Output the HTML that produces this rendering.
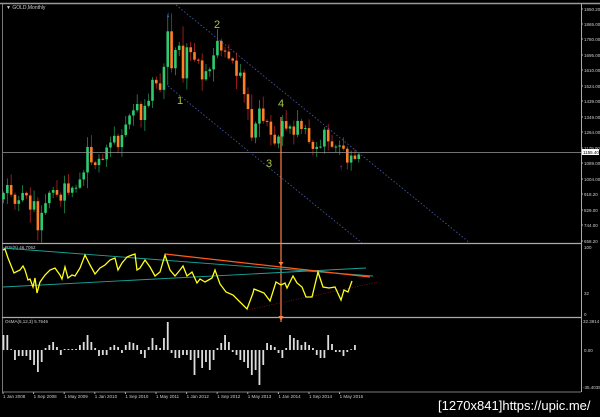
<!DOCTYPE html>
<html><head><meta charset="utf-8"><style>
html,body{margin:0;padding:0;background:#000;width:600px;height:417px;overflow:hidden}
svg{display:block}
text{font-family:"Liberation Sans",sans-serif}
</style></head><body>
<svg id="s" width="600" height="417" viewBox="0 0 600 417" xmlns="http://www.w3.org/2000/svg">
<rect width="600" height="417" fill="#000"/>
<g id="g"></g>
<text x="438" y="410" font-family="Liberation Mono,monospace" font-size="13" fill="#fff">[1270x841]https://upic.me/</text>
</svg>
<script>
var out=[];
function L(x1,y1,x2,y2,c,w,d){out.push('<line x1="'+x1+'" y1="'+y1+'" x2="'+x2+'" y2="'+y2+'" stroke="'+c+'" stroke-width="'+(w||1)+'"'+(d?' stroke-dasharray="'+d+'"':'')+'/>');}
function T(x,y,s,sz,c,a){out.push('<text x="'+x+'" y="'+y+'" font-size="'+sz+'" fill="'+c+'"'+(a?' text-anchor="'+a+'"':'')+'>'+s+'</text>');}
// frame
L(0,3.5,600,3.5,'#9a9a9a',1.5);
L(2.5,4,2.5,392,'#777',1);
L(581.5,4,581.5,392,'#aaa',1);
L(2,243.5,581,243.5,'#aaa',1.2);L(2,317.5,581,317.5,'#aaa',1.2);
L(2,392,581,392,'#777',1);
T(6,9,'▼ GOLD,Monthly',5,'#ccc');
// price axis
var lab=[[1950.2,9],[1865,24],[1780,39],[1695,55],[1610,70],[1524,86],[1439,101],[1349,117],[1264,132],[1179,148],[1089,163],[1004,179],[918.2,194],[829,210],[744,225],[658.2,241]];
lab.forEach(function(a){T(584,a[1]+2,a[0].toFixed(2),4.5,'#ccc');L(581,a[1],583,a[1],'#aaa');});
function py(p){return 9+(1950.2-p)*(232/1292);}
// candles
var c=[925,970,916,865,885,926,912,833,880,718,815,869,927,942,916,883,979,927,955,955,1001,1040,1182,1096,1081,1116,1113,1179,1207,1244,1181,1248,1307,1357,1386,1421,1332,1411,1439,1556,1536,1500,1628,1826,1620,1722,1746,1564,1737,1710,1668,1664,1558,1604,1614,1692,1773,1719,1713,1675,1663,1578,1596,1476,1393,1234,1312,1396,1327,1323,1250,1201,1240,1326,1284,1296,1250,1327,1282,1287,1210,1171,1182,1184,1278,1213,1183,1184,1190,1172,1095,1134,1115,1140];
var o=890;
for(var i=0;i<c.length;i++){var x=3.5+i*3.82,cl=c[i],up=cl>=o;var col=up?'#2ecc71':'#ff7f27';
var r=Math.abs(cl-o)*0.25+18+((i*37)%20);var hi=Math.max(o,cl)+r*((i%3)/2+0.3),lo=Math.min(o,cl)-r*(((i+1)%3)/2+0.3);
if(i==43)hi=1920;
L(x,py(hi),x,py(lo),up?'#1f8f4f':'#b22',0.8);
var t=py(Math.max(o,cl)),b=py(Math.min(o,cl));if(b-t<1)b=t+1;
out.push('<rect x="'+(x-1.3)+'" y="'+t+'" width="2.6" height="'+(b-t)+'" fill="'+col+'"/>');o=cl;}
// current price line
L(3,152.5,581,152.5,'#999',0.8);
out.push('<rect x="582" y="149" width="17" height="6" fill="#fff"/>');T(583,154,'1155.40',4.5,'#000');
// channel
L(176,5,470,243,'#4a5fb0',0.8,'1.5,2');L(168,86,362,243,'#4a5fb0',0.8,'1.5,2');
// arrows
T(168,17,'↓',8,'#39f','middle');T(341,170,'↑',8,'#c3c','middle');
var gc='#a8c24a';T(180,104,'1',11,gc,'middle');T(217,28,'2',11,gc,'middle');T(269,167,'3',11,gc,'middle');T(281,107,'4',11,gc,'middle');
// orange vertical
L(281,117,281,322,'#ff7f3f',1.2);
out.push('<path d="M278.5,262 L283.5,262 L281,266Z M278.5,316 L283.5,316 L281,321Z" fill="#ff7f3f"/>');
// RSI
T(5,249,'RSI(5) 46.7062',4.5,'#ccc');
T(584,249,'100',4.5,'#ccc');T(584,295,'32',4.5,'#ccc');T(584,316,'0',4.5,'#ccc');
L(3,248,373,276,'#1aa39a',0.9);L(3,287,366,268,'#1aa39a',0.9);
L(165,254,370,277,'#ff5a1a',1.3);L(247,310,378,282,'#8b1a1a',0.7,'1,1.5');
var rp=[[3,250],[5,249],[8,258],[14,273],[20,270],[23,266],[25,270],[28,280],[30,279],[33,287],[35,278],[37,293],[40,282],[45,275],[50,270],[55,268],[60,275],[62,279],[65,267],[68,278],[72,275],[75,276],[80,268],[85,255],[90,265],[95,274],[100,268],[105,265],[110,260],[115,258],[118,270],[122,263],[127,257],[132,255],[135,254],[137,270],[140,268],[145,260],[150,267],[155,276],[160,272],[165,255],[170,270],[175,276],[180,270],[183,266],[187,276],[192,272],[197,283],[200,279],[205,282],[212,278],[215,270],[220,284],[226,292],[233,295],[239,301],[247,309],[253,293],[254,289],[264,293],[270,301],[276,282],[281,285],[285,283],[287,288],[293,276],[297,283],[302,287],[306,297],[312,297],[318,272],[323,287],[329,288],[335,287],[341,300],[344,290],[348,292],[352,281]];
out.push('<polyline fill="none" stroke="#ffff1a" stroke-width="1.3" points="'+rp.map(function(p){return p.join(',')}).join(' ')+'"/>');
// OsMA
T(5,323,'OsMA(5,12,3) 5.7646',4.5,'#ccc');
T(583,323,'32.3914',4.5,'#ccc');T(584,352,'0.00',4.5,'#ccc');T(583,389,'-35.4035',4.5,'#ccc');
var h=[15,15,0,-10,-6,-6,-6,-10,-15,-22,-12,2,5,8,3,-5,1,1,1,1,5,8,15,8,2,-6,-5,-5,3,5,3,-3,5,8,7,5,-4,-8,3,12,5,2,12,28,-3,-8,-8,-5,-5,-10,-25,-8,-18,-12,-20,-10,2,7,15,8,-2,-5,-10,-12,-18,-25,-20,-35,-15,7,5,3,-3,-8,2,15,12,10,5,8,5,2,-5,-8,-8,15,6,-2,-2,-6,-2,0,5];
for(var i=0;i<h.length;i++){var x=3.5+i*3.82;var v=h[i];if(v==0)v=0.8;
out.push('<rect x="'+(x-0.9)+'" y="'+(v>0?350-v:350)+'" width="1.8" height="'+Math.abs(v)+'" fill="#ddd"/>');}
// dates
var d=['1 Jan 2008','1 Sep 2008','1 May 2009','1 Jan 2010','1 Sep 2010','1 May 2011','1 Jan 2012','1 Sep 2012','1 May 2013','1 Jan 2014','1 Sep 2014','1 May 2015'];
d.forEach(function(s,k){var x=3+k*30.6;T(x,398,s,4.5,'#ccc');L(x,392,x,394,'#aaa');});
document.getElementById('g').innerHTML=out.join('');
</script>
</body></html>
